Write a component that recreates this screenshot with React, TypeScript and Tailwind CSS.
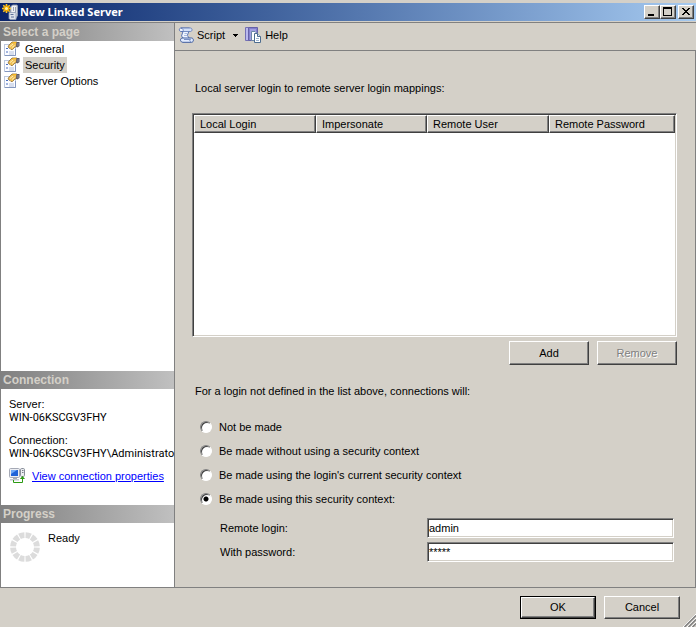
import { useState } from "react";
import type { ReactNode } from "react";

const pages = ["General", "Security", "Server Options"];

const contexts = [
  "Not be made",
  "Be made without using a security context",
  "Be made using the login's current security context",
  "Be made using this security context:",
];

const raised =
  "border border-t-white border-l-white border-r-[#404040] border-b-[#404040] shadow-[inset_-1px_-1px_0_#808080] bg-[#d4d0c8]";
const sunken =
  "border border-t-[#808080] border-l-[#808080] border-r-white border-b-white shadow-[inset_1px_1px_0_#404040,inset_-1px_-1px_0_#d4d0c8] bg-white";

function ServerIcon() {
  return (
    <svg width="16" height="16" viewBox="0 0 16 16" className="shrink-0">
      <path d="M8.500 3l2-2H15l.5 1v9.500L13.500 15H8.500z" fill="#d5d8de" stroke="#99a3b5" strokeWidth="0.800" />
      <path d="M10 2h4v7h-4z" fill="#f1f2f4" />
      <path d="M11.500 3v4M13.500 3v6" stroke="#9aa3b2" />
      <path d="M7 8.500h6l1 1V15.500H8L7 14.500z" fill="#dde2ea" stroke="#8e9cb5" strokeWidth="0.800" />
      <path d="M8.500 10.500h3M9 13h3" stroke="#5e7299" />
      <path
        d="M4.500 0v9M0 4.500h9M1.300 1.300l6.400 6.400M7.700 1.300L1.300 7.700"
        stroke="#ffc928"
        strokeWidth="1.600"
      />
      <circle cx="4.500" cy="4.500" r="2.300" fill="#fff3a0" stroke="#f2a900" strokeWidth="1.500" />
    </svg>
  );
}

function PageIcon() {
  return (
    <svg width="16" height="16" viewBox="0 0 16 16" className="shrink-0">
      <rect x="0.500" y="3.500" width="11" height="11" fill="#fbfcff" stroke="#bcc7dd" />
      <path d="M1 14.500h10.500V8" fill="none" stroke="#8497bf" />
      <path d="M2 7.500h2M2 11h2" stroke="#4a6fc0" />
      <path d="M5 11h5M5 13h5" stroke="#b3c0dc" />
      <path d="M4 6l1-2 3-3h5v4.500l-2 .5-2.500 2.500H7L6 7.500z" fill="#f0bf52" stroke="#8f7038" strokeWidth="0.800" />
      <path d="M6 5.500l3-2.500M8 6.500l2.500-2" stroke="#fff0bd" />
      <path d="M9 1.500h4" stroke="#f7b51c" />
      <path d="M12.500 1h3v4l-2 1.500-1.500-1z" fill="#5c5969" />
      <path d="M14 2v3" stroke="#8c93a8" />
    </svg>
  );
}

function ScriptIcon() {
  return (
    <svg width="16" height="16" viewBox="0 0 16 16" className="shrink-0">
      <path
        d="M3 1h8.500l-.7 3.500-1.500 4 2.200 3H5.500L3.500 9 5 4.500H3C.800 4.500.800 1 3 1z"
        fill="#f0f5ff"
        stroke="#5b75b2"
      />
      <path d="M3 1h9.500c2 0 2 3.500 0 3.500H5C5.700 3 4.800 1.500 3 1z" fill="#d3e0f8" stroke="#5b75b2" strokeWidth="0.800" />
      <path
        d="M4 11h9.500c2.500 0 2.500 4.300 0 4.300H5c-2.700 0-3.500-3.500-1-4.300z"
        fill="#e2ecff"
        stroke="#3f5c9e"
      />
      <path d="M13 15c-1.500-.6-1.500-2.200-.5-2.500H6" fill="none" stroke="#7890c4" />
      <path d="M6.500 6.500h3M6 8.500h3" stroke="#a9bbe0" />
    </svg>
  );
}

function HelpIcon() {
  return (
    <svg width="16" height="16" viewBox="0 0 16 16" className="shrink-0">
      <path d="M.5.500h3v13h-3z" fill="#b9b8ee" stroke="#7470b4" />
      <path d="M3.500.500h9v13h-9z" fill="#8380cd" stroke="#6561a8" />
      <path d="M5 2h6v11H5z" fill="#a19fe0" />
      <path d="M6.500 4.500H10L12.500 7v6.500h-6z" fill="#fff" stroke="#6c87a8" />
      <path d="M9.500 6.500h3l3 3v6h-6z" fill="#fff" stroke="#4d6c8f" />
      <path d="M12.500 6.500v3h3" fill="#dbe7f5" stroke="#4d6c8f" />
      <path d="M11 11.500h3M11 13.500h3" stroke="#9db3cf" />
    </svg>
  );
}

function ConnectionIcon() {
  return (
    <svg width="16" height="16" viewBox="0 0 16 16" className="shrink-0">
      <rect x="0.500" y="0.500" width="10" height="9" rx="1" fill="#eceef3" stroke="#a5a9b5" />
      <path d="M2 2h7v6H2z" fill="#1f62d8" />
      <path d="M2 2h6L2 6z" fill="#6fa9f7" />
      <path d="M4 10h4v1H4z" fill="#a4a9b4" />
      <path d="M1 11h9v1.500H1z" fill="#c3c7d0" />
      <rect x="11.500" y="0.500" width="4" height="8" rx="1.200" fill="#eceef1" stroke="#888e99" />
      <path d="M13 2.500h1.500M13 4.500h1.500" stroke="#777e8a" />
      <path d="M4.500 12v2.500h9V10" fill="none" stroke="#2c9b13" />
      <path d="M10.800 11l2.700-3 2.500 3z" fill="#2c9b13" />
    </svg>
  );
}

function Spinner() {
  const angles = [0, 30, 60, 90, 120, 150, 180, 210, 240, 270, 300, 330];
  return (
    <svg width="30" height="30" viewBox="0 0 30 30" className="shrink-0">
      {angles.map((a) => (
        <path
          key={a}
          d="M11.800 0.500Q15 -0.300 18.200 0.500L16.900 6.200Q15 5.800 13.100 6.200Z"
          fill="#dcdcdc"
          transform={`rotate(${a + 15} 15 15)`}
        />
      ))}
    </svg>
  );
}

function SectionTitle({ children }: { children: ReactNode }) {
  return (
    <h2 className="h-[18px] bg-linear-to-r from-[#808080] to-[#c0c0c0] pl-[2px] text-[12px] leading-[18px] font-bold text-[#d4d0c8]">
      {children}
    </h2>
  );
}

function TitleButton({ label, children }: { label: string; children: ReactNode }) {
  return (
    <button type="button" aria-label={label} className={`h-[14px] w-4 ${raised}`}>
      <svg width="14" height="12" viewBox="0 0 14 12" shapeRendering="crispEdges">
        {children}
      </svg>
    </button>
  );
}

export default function App() {
  const [page, setPage] = useState("Security");
  const [context, setContext] = useState(3);
  const [login, setLogin] = useState("admin");
  const [password, setPassword] = useState("admin");

  return (
    <div className="relative flex min-h-screen flex-col bg-[#d4d0c8] pt-[3px] font-['Liberation_Sans',Arial,sans-serif] text-[11px] leading-[13px] text-black">
      <header className="flex h-[18px] items-center bg-linear-to-r from-[#0a246a] to-[#a6caf0] pr-[2px] pl-[2px]">
        <ServerIcon />
        <h1 className="ml-[2px] flex-1 font-['Noto_Sans',sans-serif] text-[11px] leading-4 font-bold text-white">
          New Linked Server
        </h1>
        <TitleButton label="Minimize">
          <path d="M3 8h6v2H3z" />
        </TitleButton>
        <TitleButton label="Maximize">
          <path d="M2 1h9v9H2zM3 3v6h7V3z" fillRule="evenodd" />
        </TitleButton>
        <div className="w-[2px]" />
        <TitleButton label="Close">
          <path d="M3 2h2v1h1v1h2V3h1V2h2v1h-1v1H9v1H8v1h1v1h1v1h1v1H9V8H8V7H6v1H5v1H3V8h1V7h1V6h1V5H5V4H4V3H3z" />
        </TitleButton>
      </header>

      <div className="mt-px grid flex-1 grid-cols-[175px_1fr] border-t border-[#808080]">
        <aside className="flex flex-col border-x border-b border-[#808080] bg-white">
          <SectionTitle>Select a page</SectionTitle>
          <ul className="flex-1">
            {pages.map((name) => (
              <li key={name} className="flex h-4 items-center pl-[3px]">
                <PageIcon />
                <button
                  type="button"
                  onClick={() => setPage(name)}
                  className={`ml-[3px] h-4 px-[2px] ${page === name ? "bg-[#d4d0c8]" : ""}`}
                >
                  {name}
                </button>
              </li>
            ))}
          </ul>

          <SectionTitle>Connection</SectionTitle>
          <div className="h-[116px] pt-[9px] pl-2">
            <p>Server:</p>
            <p className="font-[Roboto,sans-serif]">WIN-06KSCGV3FHY</p>
            <p className="mt-[10px]">Connection:</p>
            <p className="font-[Roboto,sans-serif] whitespace-nowrap">WIN-06KSCGV3FHY\Administrato</p>
            <div className="mt-2 flex items-center gap-[7px]">
              <ConnectionIcon />
              <a href="#" className="whitespace-nowrap text-[#0000ff] underline">
                View connection properties
              </a>
            </div>
          </div>

          <SectionTitle>Progress</SectionTitle>
          <div className="flex h-16 gap-2 pt-[9px] pl-[9px]">
            <Spinner />
            <p>Ready</p>
          </div>
        </aside>

        <div className="flex flex-col">
          <div className="flex h-[27px] items-center pb-[3px] pl-[3px]">
            <button type="button" className="flex items-center gap-[3px]">
              <ScriptIcon />
              Script
            </button>
            <button type="button" aria-label="Script options" className="ml-2 w-[12px]">
              <svg width="5" height="3" viewBox="0 0 5 3" shapeRendering="crispEdges">
                <path d="M0 0h5v1H4v1H3v1H2V2H1V1H0z" />
              </svg>
            </button>
            <button type="button" className="flex items-center gap-1">
              <HelpIcon />
              Help
            </button>
          </div>

          <main className="flex flex-1 flex-col border-t border-r border-b border-[#808080] pt-[29px] pr-[18px] pb-[25px] pl-[17px]">
            <p className="pl-[3px] leading-4">Local server login to remote server login mappings:</p>
            <div className={`mt-[17px] min-h-[120px] flex-1 p-px ${sunken}`}>
              <table className="w-full table-fixed border-separate border-spacing-0 text-left">
                <colgroup>
                  <col className="w-[122px]" />
                  <col className="w-[111px]" />
                  <col className="w-[122px]" />
                  <col />
                </colgroup>
                <thead>
                  <tr>
                    {["Local Login", "Impersonate", "Remote User", "Remote Password"].map((name) => (
                      <th key={name} className={`h-[18px] py-0 pr-0 pl-[5px] font-normal ${raised}`}>
                        {name}
                      </th>
                    ))}
                  </tr>
                </thead>
              </table>
            </div>
            <div className="mt-1 flex justify-end gap-2">
              <button type="button" className={`h-6 w-20 ${raised}`}>
                Add
              </button>
              <button
                type="button"
                disabled
                className={`h-6 w-20 text-[#808080] [text-shadow:1px_1px_0_#fff] ${raised}`}
              >
                Remove
              </button>
            </div>

            <fieldset className="mt-[18px]">
              <legend className="pl-[3px] leading-4">
                For a login not defined in the list above, connections will:
              </legend>
              <div className="mt-4">
                {contexts.map((text, i) => (
                  <label key={text} className="flex h-6 items-center gap-[7px] pl-2">
                    <input
                      type="radio"
                      name="context"
                      checked={context === i}
                      onChange={() => setContext(i)}
                      className="size-3 appearance-none rounded-full border border-t-[#808080] border-r-white border-b-white border-l-[#808080] bg-white shadow-[inset_1px_1px_0_#404040] checked:bg-[radial-gradient(circle,#000_2px,#fff_3px)]"
                    />
                    {text}
                  </label>
                ))}
              </div>
            </fieldset>
            <div className="mt-1 grid grid-cols-[207px_1fr] items-center gap-y-1 pt-[3px] pr-[3px] pl-7">
              <label htmlFor="login">Remote login:</label>
              <input
                id="login"
                value={login}
                onChange={(e) => setLogin(e.target.value)}
                className={`h-5 w-full px-px outline-none ${sunken}`}
              />
              <label htmlFor="password">With password:</label>
              <input
                id="password"
                value={password.replace(/./g, "*")}
                onChange={(e) => setPassword(e.target.value)}
                className={`h-5 w-full px-px outline-none ${sunken}`}
              />
            </div>
          </main>
        </div>
      </div>

      <footer className="flex justify-end gap-2 pt-2 pr-4 pb-2">
        <div className="border border-black">
          <button type="button" className={`h-[21px] w-[74px] ${raised}`}>
            OK
          </button>
        </div>
        <button type="button" className={`h-[23px] w-[76px] ${raised}`}>
          Cancel
        </button>
      </footer>
      <svg width="13" height="13" viewBox="0 0 13 13" className="absolute right-0 bottom-0">
        <path d="M0 13L13 0M4 13l9-9M8 13l5-5" stroke="#fff" />
        <path d="M1.500 13L13 1.500M5.500 13L13 5.500M9.500 13L13 9.500" stroke="#808080" strokeWidth="1.500" />
      </svg>
    </div>
  );
}
